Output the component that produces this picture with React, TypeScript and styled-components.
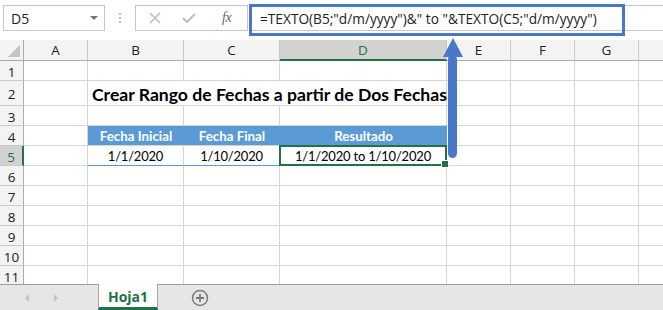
import React from "react";
import styled, { createGlobalStyle, css } from "styled-components";

const Global = createGlobalStyle`
  html, body { margin: 0; padding: 0; background: #fff; }
  body { width: 663px; height: 310px; overflow: hidden; }
  * { box-sizing: border-box; }
`;

const COLS = [24, 64, 96, 96, 167, 64, 64, 64, 24];
const LETTERS = ["", "A", "B", "C", "D", "E", "F", "G", ""];
const ROWS = [20, 25, 20, 20, 20, 20, 20, 20, 20, 20, 20];

const Page = styled.div`
  position: relative;
  width: 663px;
  height: 310px;
  overflow: hidden;
  background: #fff;
  display: flex;
  flex-direction: column;
`;

const Toolbar = styled.div`
  height: 40px;
  display: flex;
  align-items: flex-start;
  padding: 5px 0 0 3px;
  background: #fff;
  font-family: "Open Sans", sans-serif;
`;

const NameBox = styled.div`
  width: 102px;
  height: 26px;
  border: 1px solid #c6c6c6;
  display: flex;
  align-items: center;
  justify-content: space-between;
  padding: 0 6px 0 7px;
  font-size: 14px;
  color: #222;
`;

const DropTri = styled.span`
  width: 0;
  height: 0;
  border-left: 4px solid transparent;
  border-right: 4px solid transparent;
  border-top: 4px solid #777;
`;

const Dots = styled.div`
  width: 30px;
  height: 26px;
  display: flex;
  flex-direction: column;
  align-items: center;
  justify-content: center;
  gap: 2px;
  span {
    width: 2px;
    height: 2px;
    background: #bbb;
  }
`;

const ButtonsBox = styled.div`
  width: 113px;
  height: 26px;
  border: 1px solid #c6c6c6;
  display: flex;
  align-items: center;
  padding-left: 13px;
`;

const IconSlot = styled.div<{ $w: number }>`
  width: ${(p) => p.$w}px;
  height: 26px;
  display: flex;
  align-items: center;
`;

const Fx = styled.span`
  font-family: "Liberation Serif", serif;
  font-style: italic;
  font-size: 14px;
  color: #666;
  letter-spacing: -0.5px;
`;

const FormulaField = styled.div`
  position: relative;
  flex: 1;
  height: 26px;
  margin-left: 1px;
  border-top: 1px solid #c6c6c6;
  border-bottom: 1px solid #c6c6c6;
  display: flex;
  align-items: center;
  padding-left: 11px;
  font-family: "Open Sans", sans-serif;
  font-size: 13.7px;
  color: #222;
  white-space: nowrap;
`;

const Highlight = styled.div`
  position: absolute;
  left: 0;
  top: -2px;
  width: 376px;
  height: 32px;
  border: 3px solid #4a78c9;
  pointer-events: none;
`;

const Sheet = styled.div`
  height: 244px;
  overflow: hidden;
  display: grid;
  grid-template-columns: ${COLS.map((c) => c + "px").join(" ")};
  grid-template-rows: 21px ${ROWS.map((r) => r + "px").join(" ")};
`;

const ColHead = styled.div<{ $sel?: boolean; $last?: boolean }>`
  background: ${(p) => (p.$sel ? "#d2d2d2" : "#f3f3f3")};
  border-right: ${(p) => (p.$last ? "none" : "1px solid #c9c9c9")};
  border-bottom: ${(p) => (p.$sel ? "2px solid #217346" : "1px solid #ababab")};
  display: flex;
  align-items: center;
  justify-content: center;
  font-family: "Open Sans", sans-serif;
  font-size: 13.5px;
  color: ${(p) => (p.$sel ? "#217346" : "#222")};
  padding-top: ${(p) => (p.$sel ? "1px" : "0")};
`;

const Corner = styled.div`
  position: relative;
  background: #f3f3f3;
  border-right: 1px solid #ababab;
  border-bottom: 1px solid #ababab;
  &::after {
    content: "";
    position: absolute;
    right: 3px;
    bottom: 3px;
    width: 0;
    height: 0;
    border-left: 12px solid transparent;
    border-bottom: 12px solid #c3c3c3;
  }
`;

const RowHead = styled.div<{ $sel?: boolean }>`
  background: ${(p) => (p.$sel ? "#d2d2d2" : "#f3f3f3")};
  border-right: ${(p) => (p.$sel ? "2px solid #217346" : "1px solid #ababab")};
  border-bottom: 1px solid #c9c9c9;
  display: flex;
  align-items: center;
  justify-content: center;
  font-family: "Open Sans", sans-serif;
  font-size: 13.5px;
  color: ${(p) => (p.$sel ? "#217346" : "#222")};
  padding-top: 2px;
`;

const Cell = styled.div<{ $span?: number; $noRight?: boolean; $noBottom?: boolean }>`
  ${(p) => p.$span && css`grid-column: span ${p.$span};`}
  border-right: ${(p) => (p.$noRight ? "none" : "1px solid #d4d4d4")};
  border-bottom: ${(p) => (p.$noBottom ? "none" : "1px solid #d4d4d4")};
  font-family: "Lato", sans-serif;
  white-space: nowrap;
`;

const TitleCell = styled(Cell)`
  display: flex;
  align-items: center;
  padding: 2px 0 0 4px;
  font-weight: 700;
  font-size: 17.6px;
  color: #000;
  overflow: visible;
`;

const HeaderCell = styled.div`
  background: #5b9bd5;
  color: #fff;
  font-family: "Lato", sans-serif;
  font-weight: 700;
  font-size: 13.3px;
  display: flex;
  align-items: center;
  justify-content: center;
  padding-top: 1px;
  white-space: nowrap;
  border-bottom: 1px solid #d4d4d4;
`;

const DataCell = styled.div<{ $selected?: boolean }>`
  position: relative;
  font-family: "Lato", sans-serif;
  font-size: 13px;
  letter-spacing: -0.2px;
  color: #000;
  display: flex;
  align-items: center;
  justify-content: center;
  padding-top: 1px;
  white-space: nowrap;
  border-right: 1px solid #d4d4d4;
  border-bottom: 1px solid #5b9bd5;
  ${(p) =>
    p.$selected &&
    css`
      border: 2px solid #217346;
      margin: -1px 0 0 -1px;
      width: calc(100% + 1px);
      height: calc(100% + 1px);
      &::after {
        content: "";
        position: absolute;
        right: -4px;
        bottom: -4px;
        width: 6px;
        height: 6px;
        background: #217346;
        border: 1px solid #fff;
      }
    `}
`;

const TabBar = styled.div`
  flex: 1;
  background: #e6e6e6;
  border-top: 1px solid #9c9c9c;
  display: flex;
  align-items: stretch;
  font-family: "Open Sans", sans-serif;
`;

const NavArrows = styled.div`
  width: 98px;
  display: flex;
  align-items: center;
  padding-left: 24px;
  gap: 23px;
`;

const Tab = styled.div`
  width: 60px;
  margin-top: -1px;
  background: #fff;
  border-left: 1px solid #a8a8a8;
  border-right: 1px solid #a8a8a8;
  border-bottom: 3px solid #217346;
  display: flex;
  align-items: center;
  justify-content: center;
  font-weight: 700;
  font-size: 14px;
  color: #217346;
  padding-top: 1px;
`;

const AddSheet = styled.div`
  display: flex;
  align-items: center;
  padding-left: 33px;
`;

const ArrowOverlay = styled.svg`
  position: absolute;
  left: 442px;
  top: 37px;
`;

const Triangle = ({ dir }: { dir: "l" | "r" }) => (
  <svg width="6" height="10" viewBox="0 0 6 10">
    <path d={dir === "l" ? "M5 1 L1 5 L5 9 Z" : "M1 1 L5 5 L1 9 Z"} fill="#c3c3c3" />
  </svg>
);

export default function App() {
  const rowEls: React.ReactNode[] = [];
  ROWS.forEach((_, i) => {
    const r = i + 1;
    rowEls.push(
      <RowHead key={`h${r}`} $sel={r === 5}>
        {r}
      </RowHead>
    );
    if (r === 2) {
      rowEls.push(<Cell key="2a" />);
      rowEls.push(
        <TitleCell key="2t" $span={3}>
          Crear Rango de Fechas a partir de Dos Fechas
        </TitleCell>
      );
      for (let c = 5; c <= 8; c++) rowEls.push(<Cell key={`2-${c}`} $noRight={c === 8} />);
    } else if (r === 4) {
      rowEls.push(<Cell key="4a" />);
      rowEls.push(<HeaderCell key="4b">Fecha Inicial</HeaderCell>);
      rowEls.push(<HeaderCell key="4c">Fecha Final</HeaderCell>);
      rowEls.push(<HeaderCell key="4d">Resultado</HeaderCell>);
      for (let c = 5; c <= 8; c++) rowEls.push(<Cell key={`4-${c}`} $noRight={c === 8} />);
    } else if (r === 5) {
      rowEls.push(<Cell key="5a" />);
      rowEls.push(<DataCell key="5b">1/1/2020</DataCell>);
      rowEls.push(<DataCell key="5c">1/10/2020</DataCell>);
      rowEls.push(
        <DataCell key="5d" $selected>
          1/1/2020 to 1/10/2020
        </DataCell>
      );
      for (let c = 5; c <= 8; c++) rowEls.push(<Cell key={`5-${c}`} $noRight={c === 8} />);
    } else {
      for (let c = 1; c <= 8; c++) rowEls.push(<Cell key={`${r}-${c}`} $noRight={c === 8} />);
    }
  });

  return (
    <Page>
      <Global />
      <Toolbar>
        <NameBox>
          <span>D5</span>
          <DropTri />
        </NameBox>
        <Dots>
          <span />
          <span />
          <span />
        </Dots>
        <ButtonsBox>
          <IconSlot $w={33}>
            <svg width="12" height="12" viewBox="0 0 12 12">
              <path d="M1 1 L11 11 M11 1 L1 11" stroke="#bdbdbd" strokeWidth="1.6" />
            </svg>
          </IconSlot>
          <IconSlot $w={40}>
            <svg width="14" height="12" viewBox="0 0 14 12">
              <path d="M1 6 L5 10 L13 2" stroke="#bdbdbd" strokeWidth="2" fill="none" />
            </svg>
          </IconSlot>
          <IconSlot $w={20}>
            <Fx>fx</Fx>
          </IconSlot>
        </ButtonsBox>
        <FormulaField>
          <Highlight />
          {'=TEXTO(B5;"d/m/yyyy")&" to "&TEXTO(C5;"d/m/yyyy")'}
        </FormulaField>
      </Toolbar>
      <Sheet>
        <Corner />
        {LETTERS.slice(1).map((l, i) => (
          <ColHead key={`c${i}`} $sel={l === "D"} $last={i === LETTERS.length - 2}>
            {l}
          </ColHead>
        ))}
        {rowEls}
      </Sheet>
      <TabBar>
        <NavArrows>
          <Triangle dir="l" />
          <Triangle dir="r" />
        </NavArrows>
        <Tab>Hoja1</Tab>
        <AddSheet>
          <svg width="18" height="18" viewBox="0 0 18 18">
            <circle cx="9" cy="9" r="7.5" stroke="#7a7a7a" strokeWidth="1.5" fill="none" />
            <path d="M9 5 V13 M5 9 H13" stroke="#7a7a7a" strokeWidth="1.8" />
          </svg>
        </AddSheet>
      </TabBar>
      <ArrowOverlay width="22" height="123" viewBox="0 0 22 123">
        <path d="M11 1 L21 20 L1 20 Z" fill="#4a78c9" />
        <rect x="6" y="18" width="9" height="103" rx="4.5" fill="#4a78c9" />
      </ArrowOverlay>
    </Page>
  );
}
